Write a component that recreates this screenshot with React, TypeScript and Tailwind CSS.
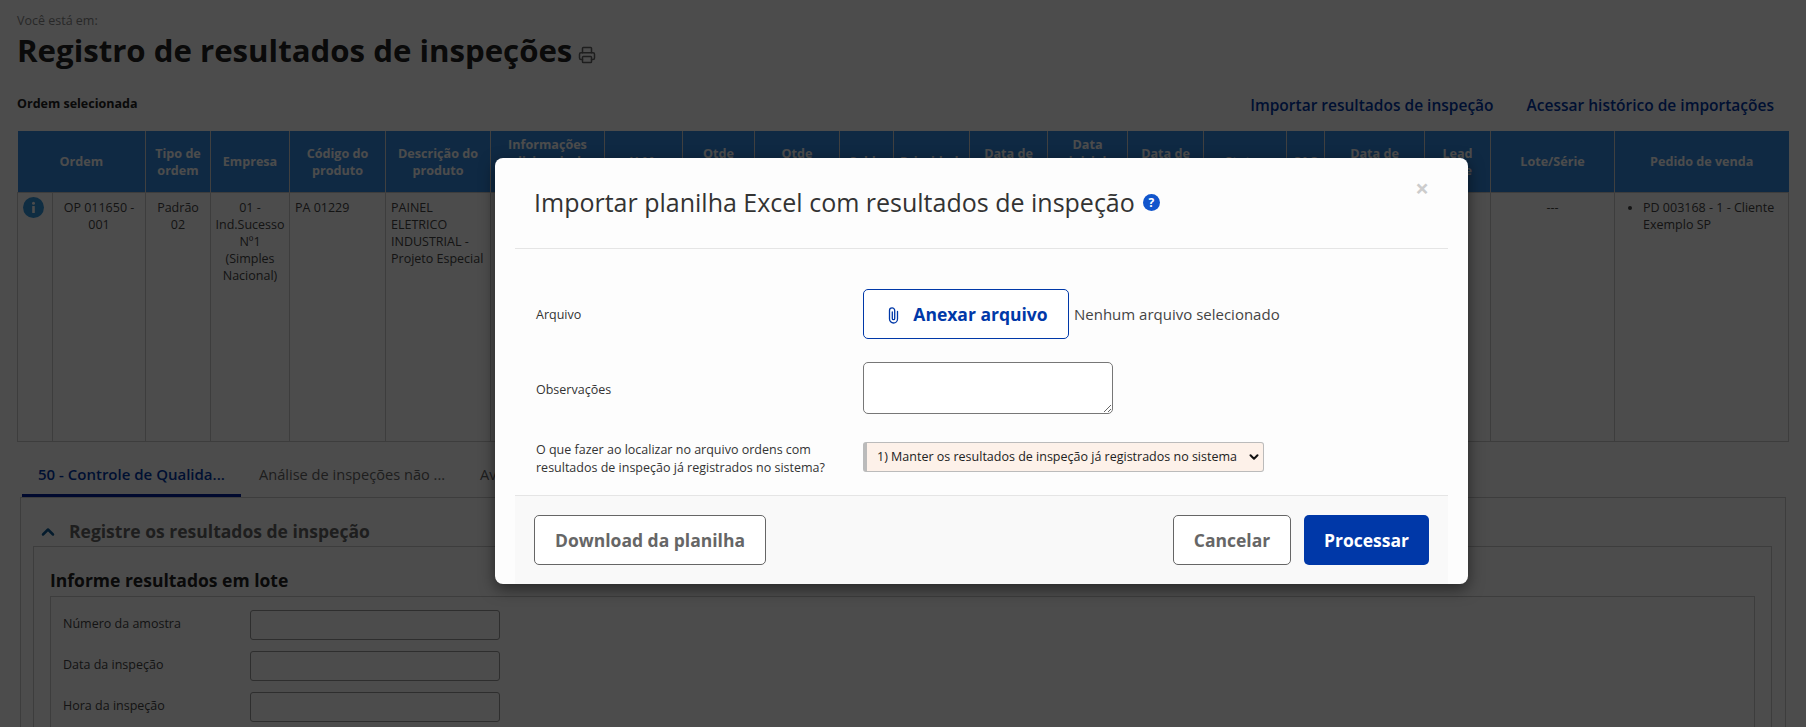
import React from 'react';
import { ChevronDown, ChevronUp, Printer } from 'lucide-react';

const colWidths = [
  'w-[35px]', 'w-[93px]', 'w-[65px]', 'w-[79px]', 'w-[96px]', 'w-[105px]', 'w-[114px]',
  'w-[78px]', 'w-[72px]', 'w-[85px]', 'w-[54px]', 'w-[76px]', 'w-[78px]', 'w-[80px]',
  'w-[76px]', 'w-[83px]', 'w-[38px]', 'w-[100px]', 'w-[66px]', 'w-[124px]', 'w-[174px]',
];

const headers = [
  'Tipo de ordem', 'Empresa', 'Código do produto', 'Descrição do produto',
  'Informações adicionais da ordem', 'U.M.', 'Qtde planejada', 'Qtde produzida', 'Saldo',
  'Prioridade', 'Data de entrega', 'Data inicial prevista', 'Data de conclusão', 'Status',
  'SAC', 'Data de validade', 'Lead time', 'Lote/Série', 'Pedido de venda',
];

function PaperclipIcon() {
  return (
    <svg width="11" height="17" viewBox="0 0 11 17" fill="none" stroke="#0038a8" strokeWidth="1.3" strokeLinecap="round">
      <path d="M9.5 4.5V12a4 4 0 0 1-8 0V3.5a2.6 2.6 0 0 1 5.2 0V11.5a1.2 1.2 0 0 1-2.4 0V5" />
    </svg>
  );
}

function InfoDot() {
  return (
    <svg width="21" height="21" viewBox="0 0 21 21" className="ml-[5px]">
      <circle cx="10.5" cy="10.5" r="10.5" fill="#3397dc" />
      <circle cx="10.5" cy="6.2" r="1.5" fill="#ffffff" />
      <rect x="9.2" y="9" width="2.6" height="7" rx="0.5" fill="#ffffff" />
    </svg>
  );
}

function BatchField({ label }: { label: string }) {
  return (
    <div className="flex items-center h-[30px] mb-[11px]">
      <label className="w-[199px] pl-[12px] text-[12.5px] text-[#444]">{label}</label>
      <input className="w-[250px] h-[30px] border border-[#999] rounded-[3px] bg-white" />
    </div>
  );
}

export default function App() {
  return (
    <div className="relative h-[727px] overflow-hidden bg-white font-['Open_Sans',sans-serif] text-[#444]">
      {/* Page behind the modal */}
      <div className="pl-[17px] pr-[18px] pt-[12px]">
        <p className="text-[12.5px] leading-[17px] text-[#888]">Você está em:</p>
        <div className="flex items-end h-[42px]">
          <h1 className="text-[31.2px] leading-[42px] font-bold text-[#222] whitespace-nowrap">Registro de resultados de inspeções</h1>
          <Printer size={18} className="ml-[6px] mb-[7px] text-[#666]" />
        </div>

        <div className="flex items-center justify-between h-[24px] mt-[23px] pr-[14px]">
          <span className="text-[12.5px] font-bold text-[#222] -mt-[3px]">Ordem selecionada</span>
          <div className="flex gap-[33px]">
            <a className="text-[15.5px] font-semibold text-[#0038a8]">Importar resultados de inspeção</a>
            <a className="text-[15.5px] font-semibold text-[#0038a8]">Acessar histórico de importações</a>
          </div>
        </div>

        <table className="table-fixed border-collapse w-[1771px] mt-[13px] text-[12.5px] leading-[17px]">
          <colgroup>
            {colWidths.map((w, i) => (
              <col key={i} className={w} />
            ))}
          </colgroup>
          <thead>
            <tr className="h-[61px] bg-[#3389e0] text-white text-[12.6px]">
              <th colSpan={2} className="border-r border-[#d6d6d6] font-bold">Ordem</th>
              {headers.map((h) => (
                <th key={h} className="border-r border-[#d6d6d6] last:border-r-0 font-bold px-[6px] pt-[1px]">{h}</th>
              ))}
            </tr>
          </thead>
          <tbody>
            <tr className="h-[249px] align-top">
              <td className="border border-[#ccc] pt-[4px]"><InfoDot /></td>
              <td className="border border-[#ccc] pt-[6px] px-[6px] text-center">OP 011650 - 001</td>
              <td className="border border-[#ccc] pt-[6px] px-[6px] text-center">Padrão 02</td>
              <td className="border border-[#ccc] pt-[6px] px-[4px] text-center">01 - Ind.Sucesso Nº1 (Simples Nacional)</td>
              <td className="border border-[#ccc] pt-[6px] pl-[5px] pr-[6px]">PA 01229</td>
              <td className="border border-[#ccc] pt-[6px] pl-[5px] pr-[4px]">PAINEL ELETRICO INDUSTRIAL - Projeto Especial</td>
              {Array.from({ length: 13 }).map((_, i) => (
                <td key={i} className="border border-[#ccc]" />
              ))}
              <td className="border border-[#ccc] pt-[6px] text-center">---</td>
              <td className="border border-[#ccc] pt-[6px] pl-[28px] pr-[4px]">
                <ul className="list-disc">
                  <li>PD 003168 - 1 - Cliente Exemplo SP</li>
                </ul>
              </td>
            </tr>
          </tbody>
        </table>

        {/* Tabs */}
        <div className="flex items-start h-[55px] ml-[5px] text-[14.6px] leading-[22px]">
          <div className="h-full w-[219px] pt-[21px] pl-[16px] border-b-[3px] border-[#00219a] text-[15px] font-semibold text-[#0038a8] whitespace-nowrap">50 - Controle de Qualida...</div>
          <div className="pt-[21px] pl-[18px] w-[239px] text-[#666] whitespace-nowrap">Análise de inspeções não ...</div>
          <div className="pt-[21px] text-[#666] whitespace-nowrap">Avaliação</div>
        </div>

        <div className="ml-[3px] mr-[2px] border border-[#ccc] pl-[12px] pr-[13px] h-[300px]">
          <div className="flex items-center h-[48px] pt-[20px] pl-[5px]">
            <ChevronUp size={20} strokeWidth={3} className="text-[#0f5c96]" />
            <span className="ml-[11px] text-[17.5px] font-bold text-[#666]">Registre os resultados de inspeção</span>
          </div>
          <div className="border border-[#ccc] pl-[16px] pr-[16px] h-[300px]">
            <h2 className="flex items-center h-[49px] pt-[19px] text-[17.5px] font-bold text-[#222]">Informe resultados em lote</h2>
            <div className="border border-[#ccc] pt-[13px] h-[200px]">
              <BatchField label="Número da amostra" />
              <BatchField label="Data da inspeção" />
              <BatchField label="Hora da inspeção" />
            </div>
          </div>
        </div>
      </div>

      {/* Backdrop + modal */}
      <div className="absolute inset-0 bg-black/70 pl-[495px] pt-[158px]">
        <div className="relative w-[973px] h-[426px] px-[20px] rounded-[8px] bg-[#fdfdfd] shadow-[0_5px_15px_rgba(0,0,0,0.5)] flex flex-col text-[#333]">
          <span className="absolute right-[39px] top-[13px] text-[24px] leading-[34px] font-bold text-[#ccc]">×</span>

          <div className="flex items-center h-[91px] pl-[19px] border-b border-[#e5e5e5]">
            <h3 className="text-[25px] leading-[34px] whitespace-nowrap text-[#333] mt-[-2px]">Importar planilha Excel com resultados de inspeção</h3>
            <span className="ml-[8px] mb-[1px] flex items-center justify-center w-[17px] h-[17px] rounded-full bg-[#1155cc] text-white text-[12px] font-bold">?</span>
          </div>

          <div className="flex-1 pl-[21px] text-[12.5px] leading-[17.5px]">
            <div className="flex items-center h-[50px] mt-[40px]">
              <label className="w-[327px] pt-[2px]">Arquivo</label>
              <button className="flex items-center justify-center gap-[14px] w-[206px] h-[50px] pl-[4px] pt-[2px] border border-[#0038a8] rounded-[5px] bg-white text-[17.5px] font-bold text-[#0038a8]">
                <PaperclipIcon />
                Anexar arquivo
              </button>
              <span className="ml-[5px] pt-[2px] text-[15px] text-[#444] whitespace-nowrap">Nenhum arquivo selecionado</span>
            </div>
            <div className="flex items-center h-[52px] mt-[23px]">
              <label className="w-[327px] pt-[4px]">Observações</label>
              <textarea className="w-[250px] h-[52px] border border-[#777] rounded-[5px] bg-white" />
            </div>
            <div className="flex items-center h-[30px] mt-[28px]">
              <label className="w-[327px] pt-[3px] pr-[10px]">O que fazer ao localizar no arquivo ordens com resultados de inspeção já registrados no sistema?</label>
              <div className="relative">
                <select className="block appearance-none w-[401px] h-[30px] pl-[10px] border border-[#bbb] border-l-[4px] rounded-[3px] bg-[#fdf1e9] text-[12.5px] text-[#222]">
                  <option>1) Manter os resultados de inspeção já registrados no sistema</option>
                </select>
                <ChevronDown size={14} strokeWidth={3.5} className="absolute right-[3px] top-[8px] text-[#111] pointer-events-none" />
              </div>
            </div>
          </div>

          <div className="flex items-center justify-between h-[89px] px-[19px] border-t border-[#e5e5e5] bg-[#f9f9f9] text-[17.5px] font-bold">
            <button className="w-[232px] h-[50px] border border-[#666] rounded-[5px] bg-white text-[#666]">Download da planilha</button>
            <div className="flex gap-[13px]">
              <button className="w-[118px] h-[50px] border border-[#666] rounded-[5px] bg-white text-[#666]">Cancelar</button>
              <button className="w-[125px] h-[50px] rounded-[5px] bg-[#0038a8] text-white">Processar</button>
            </div>
          </div>
        </div>
      </div>
    </div>
  );
}
